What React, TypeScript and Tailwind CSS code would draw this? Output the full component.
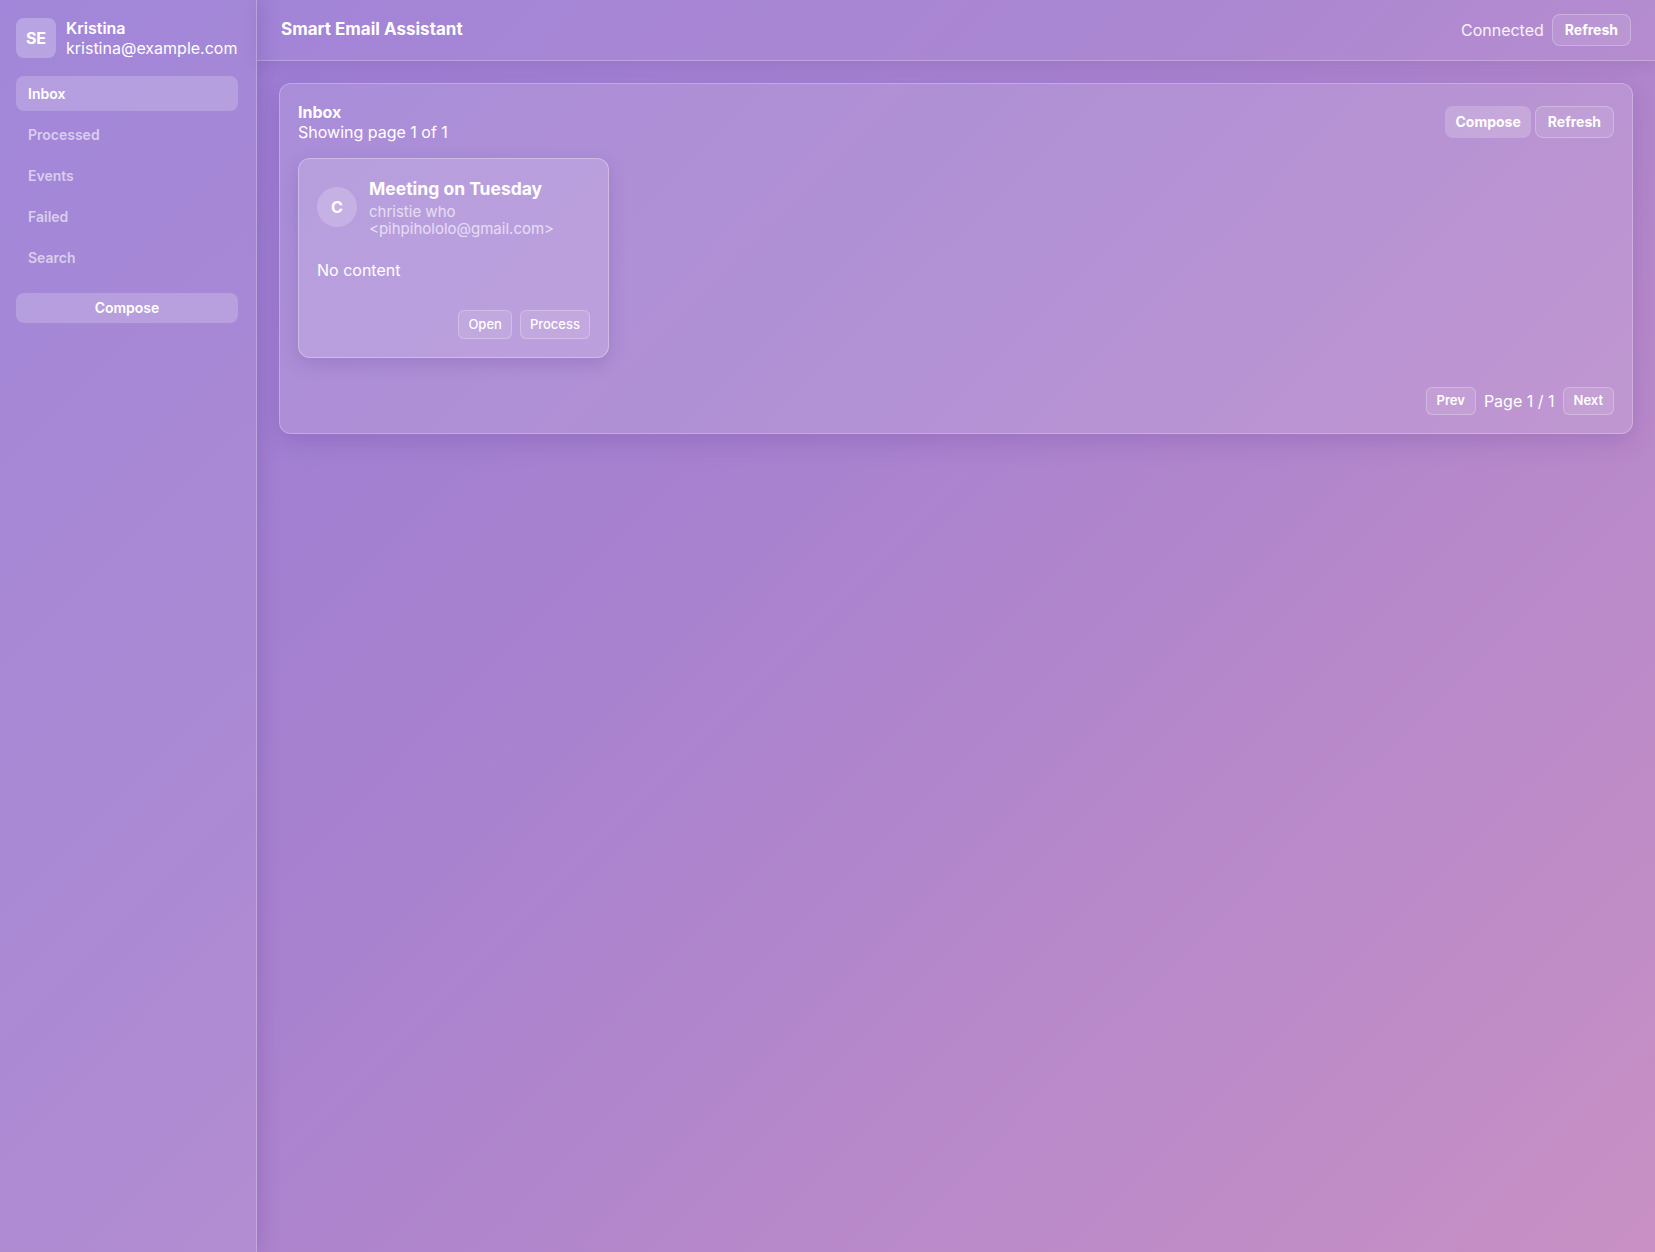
import React from "react";

const navItems = ["Inbox", "Processed", "Events", "Failed", "Search"];

export default function App() {
  return (
    <div
      className="flex h-screen w-full overflow-hidden text-white bg-[linear-gradient(135deg,#9a7dd6_0%,#a982cf_45%,#c890c4_100%)]"
      style={{ fontFamily: "Inter, 'Noto Sans', sans-serif" }}
    >
      <aside className="relative z-10 flex w-[257px] shrink-0 flex-col border-r border-white/25 bg-white/[0.07] pl-4 pr-[18px] pt-[18px] shadow-[4px_0_18px_rgba(80,40,130,0.18)]">
        <div className="flex items-center gap-[10px]">
          <div className="flex h-10 w-10 items-center justify-center rounded-lg bg-white/25 text-base font-bold">
            SE
          </div>
          <div className="flex flex-col">
            <span className="text-base font-semibold leading-5">Kristina</span>
            <span className="text-base leading-5">kristina@example.com</span>
          </div>
        </div>
        <nav className="mt-[18px] flex flex-col gap-[6px]">
          {navItems.map((n, i) => (
            <div
              key={n}
              className={
                i === 0
                  ? "flex h-[35px] items-center rounded-lg bg-white/20 px-3 text-sm font-semibold text-white"
                  : "flex h-[35px] items-center rounded-lg px-3 text-sm font-semibold text-white/60"
              }
            >
              {n}
            </div>
          ))}
        </nav>
        <button className="mt-[18px] h-[30px] w-full rounded-lg bg-white/20 text-sm font-semibold text-white">
          Compose
        </button>
      </aside>

      <main className="flex min-w-0 flex-1 flex-col">
        <header className="relative z-[5] flex h-[61px] shrink-0 items-center justify-between border-b border-white/25 bg-white/[0.05] px-6 shadow-[0_4px_14px_rgba(80,40,130,0.12)]">
          <h1 className="text-[17px] font-bold">Smart Email Assistant</h1>
          <div className="flex items-center gap-2">
            <span className="text-base text-white/90">Connected</span>
            <button className="h-8 rounded-lg border border-white/25 bg-white/10 px-3 text-sm font-bold">
              Refresh
            </button>
          </div>
        </header>

        <div className="p-[22px]">
          <section className="rounded-xl border border-white/25 bg-white/[0.12] p-[18px] shadow-[0_8px_24px_rgba(80,40,130,0.18)]">
            <div className="flex items-center justify-between">
              <div className="flex flex-col">
                <span className="text-base font-bold leading-5">Inbox</span>
                <span className="text-base leading-5">Showing page 1 of 1</span>
              </div>
              <div className="flex items-center gap-1">
                <button className="h-8 rounded-lg bg-white/20 px-[10px] text-sm font-bold">Compose</button>
                <button className="h-8 rounded-lg border border-white/25 bg-white/10 px-3 text-sm font-bold">
                  Refresh
                </button>
              </div>
            </div>

            <div className="mt-4 flex">
              <div className="w-[311px] rounded-xl border border-white/30 bg-white/[0.15] p-[18px] shadow-[0_6px_18px_rgba(80,40,130,0.18)]">
                <div className="flex items-center gap-3">
                  <div className="flex h-10 w-10 shrink-0 items-center justify-center rounded-full bg-white/20 text-base font-bold">
                    C
                  </div>
                  <div className="flex flex-col">
                    <span className="text-[17.5px] font-bold leading-6">Meeting on Tuesday</span>
                    <span className="mt-[2px] text-[15px] leading-[17px] text-white/65">christie who</span>
                    <span className="text-[15px] leading-[17px] text-white/65">&lt;pihpihololo@gmail.com&gt;</span>
                  </div>
                </div>
                <p className="mt-[21px] text-base leading-6">No content</p>
                <div className="mt-[28px] flex justify-end gap-2">
                  <button className="h-[29px] rounded-md border border-white/25 bg-white/10 px-[9px] text-[13px] font-medium">
                    Open
                  </button>
                  <button className="h-[29px] rounded-md border border-white/25 bg-white/10 px-[9px] text-[13px] font-medium">
                    Process
                  </button>
                </div>
              </div>
            </div>

            <div className="mt-[29px] flex items-center justify-end gap-2">
              <button className="h-7 rounded-md border border-white/25 bg-white/10 px-[10px] text-[13px] font-semibold">
                Prev
              </button>
              <span className="text-base">Page 1 / 1</span>
              <button className="h-7 rounded-md border border-white/25 bg-white/10 px-[10px] text-[13px] font-semibold">
                Next
              </button>
            </div>
          </section>
        </div>
      </main>
    </div>
  );
}
